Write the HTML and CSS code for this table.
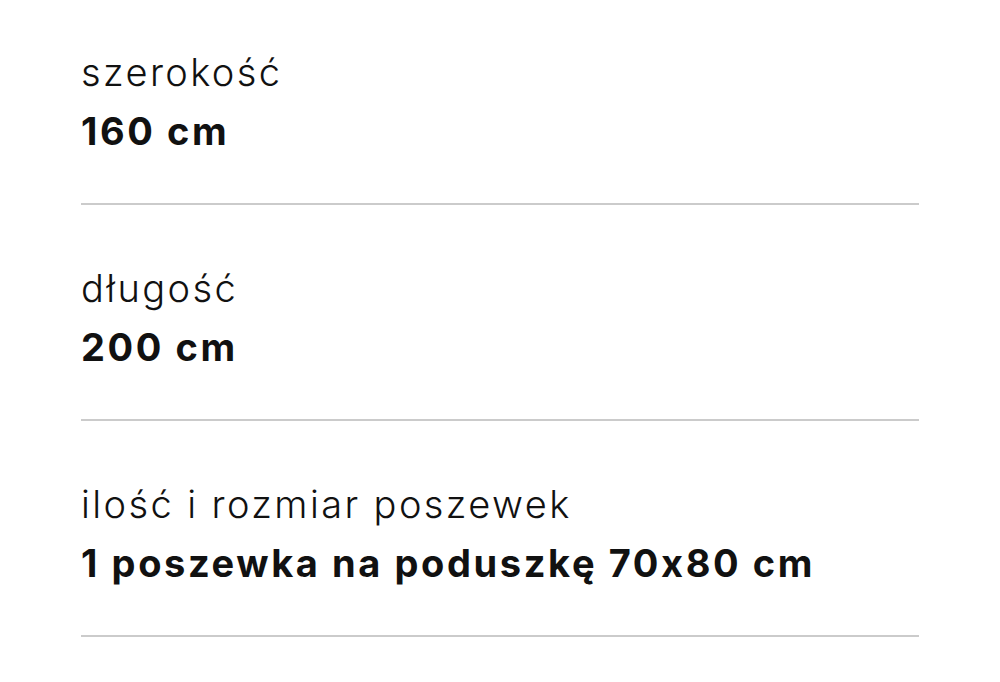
FILE: index.html
```html
<!DOCTYPE html>
<html lang="pl">
<head>
<meta charset="utf-8">
<link rel="stylesheet" href="styles.css">
</head>
<body>
<dl class="specs">
  <div class="spec">
    <dt class="spec-label">szerokość</dt>
    <dd class="spec-value">160 cm</dd>
  </div>
  <div class="spec">
    <dt class="spec-label">długość</dt>
    <dd class="spec-value">200 cm</dd>
  </div>
  <div class="spec">
    <dt class="spec-label">ilość i rozmiar poszewek</dt>
    <dd class="spec-value">1 poszewka na poduszkę 70x80 cm</dd>
  </div>
</dl>
</body>
</html>
```
FILE: styles.css
```css
html, body {
  margin: 0;
  padding: 0;
  background: #fff;
}
body {
  font-family: Inter, "Noto Sans", sans-serif;
  font-feature-settings: "calt" 0;
  color: #111;
}
.specs {
  margin: 0;
  padding: 0 81px;
  display: flex;
  flex-direction: column;
}
.spec {
  display: flex;
  flex-direction: column;
  gap: 11px;
  padding: 59px 0 48px;
  border-bottom: 2px solid #cbcbcb;
}
.spec:first-child {
  padding-top: 48px;
}
.spec-label {
  margin: 0;
  font-size: 38px;
  line-height: 48px;
  font-weight: 300;
  letter-spacing: 2.4px;
}
.spec-value {
  margin: 0;
  font-size: 38px;
  line-height: 48px;
  font-weight: 700;
  letter-spacing: 2.6px;
}
```
